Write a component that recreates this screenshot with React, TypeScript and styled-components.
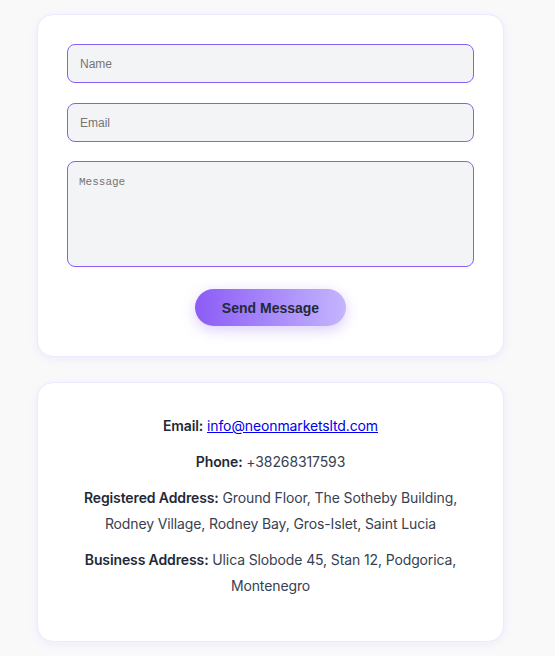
import React from "react";
import styled, { createGlobalStyle } from "styled-components";

const Global = createGlobalStyle`
  html, body { margin: 0; padding: 0; background: #f9f9fa; }
  body { font-family: Inter, "Noto Sans", sans-serif; }
  * { box-sizing: border-box; }
`;

const Page = styled.div`
  display: flex;
  flex-direction: column;
  gap: 25px;
  padding: 14px 51px 16px 37px;
`;

const Card = styled.div`
  background: #ffffff;
  border: 1px solid #ede9fe;
  border-radius: 16px;
  box-shadow: 0 2px 10px rgba(124, 58, 237, 0.08);
  padding: 29px 29px 29px 29px;
`;

const Form = styled.form`
  display: flex;
  flex-direction: column;
  gap: 20px;
  align-items: stretch;
`;

const Field = styled.input`
  height: 39px;
  border: 1px solid #8b5cf6;
  border-radius: 8px;
  background: #f3f4f6;
  padding: 0 12px;
  font-family: "Liberation Sans", Arial, sans-serif;
  font-size: 12px;
  color: #111827;
  outline: none;
  &::placeholder { color: #757575; }
`;

const Area = styled.textarea`
  height: 106px;
  margin-top: -1px;
  border: 1px solid #8b5cf6;
  border-radius: 8px;
  background: #f3f4f6;
  padding: 14px 11px;
  font-family: "Liberation Mono", monospace;
  font-size: 11px;
  resize: none;
  outline: none;
  &::placeholder { color: #757575; }
`;

const Button = styled.button`
  align-self: center;
  margin-top: 2px;
  height: 37px;
  width: 151px;
  border: none;
  border-radius: 999px;
  background: linear-gradient(90deg, #8b5cf6 0%, #c4b5fd 100%);
  box-shadow: 0 4px 14px rgba(139, 92, 246, 0.3);
  font-family: "Liberation Sans", Arial, sans-serif;
  font-weight: 700;
  font-size: 14px;
  color: #1f2937;
  cursor: pointer;
`;

const FormCard = styled(Card)`
  padding-bottom: 30px;
`;

const InfoCard = styled(Card)`
  padding: 30px 29px 30px 29px;
  text-align: center;
`;

const Line = styled.p`
  margin: 0 0 10px 0;
  font-size: 14px;
  line-height: 26px;
  letter-spacing: -0.12px;
  color: #374151;
  &:last-child { margin-bottom: 12px; }
  strong { color: #1f2937; font-weight: 600; }
  a { color: #0000ee; text-decoration: underline; }
`;

export default function App() {
  return (
    <>
      <Global />
      <Page>
        <FormCard>
          <Form onSubmit={(e) => e.preventDefault()}>
            <Field placeholder="Name" />
            <Field placeholder="Email" />
            <Area placeholder="Message" />
            <Button type="submit">Send Message</Button>
          </Form>
        </FormCard>
        <InfoCard>
          <Line>
            <strong>Email:</strong> <a href="#">info@neonmarketsltd.com</a>
          </Line>
          <Line>
            <strong>Phone:</strong> +38268317593
          </Line>
          <Line>
            <strong>Registered Address:</strong> Ground Floor, The Sotheby Building, Rodney Village, Rodney Bay, Gros-Islet, Saint Lucia
          </Line>
          <Line>
            <strong>Business Address:</strong> Ulica Slobode 45, Stan 12, Podgorica, Montenegro
          </Line>
        </InfoCard>
      </Page>
    </>
  );
}
